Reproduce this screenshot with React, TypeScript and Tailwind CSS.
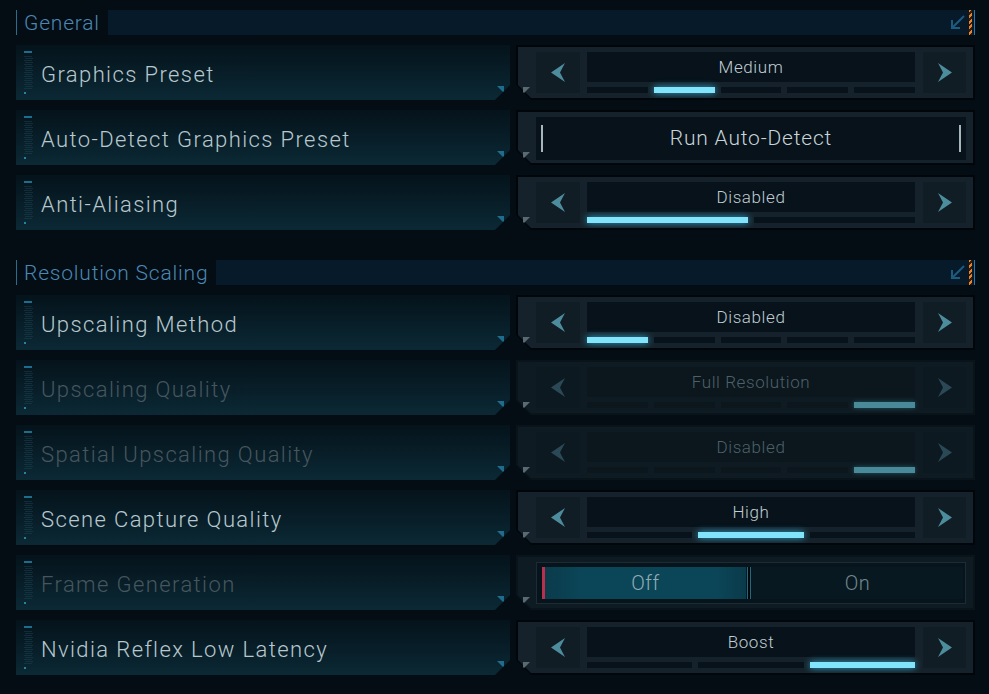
import React from 'react';

type Row = {
  label: string;
  kind: 'select' | 'button' | 'toggle';
  value?: string;
  segs?: number;
  active?: number;
  disabled?: boolean;
};

const sections: { title: string; rows: Row[] }[] = [
  {
    title: 'General',
    rows: [
      { label: 'Graphics Preset', kind: 'select', value: 'Medium', segs: 5, active: 1 },
      { label: 'Auto-Detect Graphics Preset', kind: 'button', value: 'Run Auto-Detect' },
      { label: 'Anti-Aliasing', kind: 'select', value: 'Disabled', segs: 2, active: 0 },
    ],
  },
  {
    title: 'Resolution Scaling',
    rows: [
      { label: 'Upscaling Method', kind: 'select', value: 'Disabled', segs: 5, active: 0 },
      { label: 'Upscaling Quality', kind: 'select', value: 'Full Resolution', segs: 5, active: 4, disabled: true },
      { label: 'Spatial Upscaling Quality', kind: 'select', value: 'Disabled', segs: 5, active: 4, disabled: true },
      { label: 'Scene Capture Quality', kind: 'select', value: 'High', segs: 3, active: 1 },
      { label: 'Frame Generation', kind: 'toggle', disabled: true },
      { label: 'Nvidia Reflex Low Latency', kind: 'select', value: 'Boost', segs: 3, active: 2 },
    ],
  },
];

const font = { fontFamily: 'Roboto, "Liberation Sans", sans-serif' };

function Marker() {
  const dots = [];
  for (let y = 5; y < 38; y += 2) {
    for (let x = 0; x < 8; x += 2) {
      dots.push(<rect key={`${x}-${y}`} x={x + ((y / 2) % 2)} y={y} width="1" height="1" fill="#1d4352" />);
    }
  }
  return (
    <svg width="9" height="43" viewBox="0 0 9 43" className="shrink-0">
      <rect x="0" y="0" width="8" height="2" fill="#1b6e8e" />
      {dots}
      <rect x="0" y="41" width="2" height="2" fill="#2384a6" />
    </svg>
  );
}

function Arrow({ dir, dim }: { dir: 'left' | 'right'; dim?: boolean }) {
  return (
    <svg width="15" height="19" viewBox="0 0 15 19">
      <polygon
        points={dir === 'left' ? '14,0 0,9.5 14,19 9,9.5' : '1,0 15,9.5 1,19 6,9.5'}
        fill={dim ? '#2a4855' : '#4c8c9c'}
      />
    </svg>
  );
}

function Header({ title }: { title: string }) {
  return (
    <div className="flex h-[25px] items-stretch">
      <div className="flex items-center border-l border-[#2a6c92] pl-[7px] pr-[8px] pt-[2px]">
        <span className="text-[21px] font-light leading-none tracking-[0.8px] text-[#4a88b4]" style={font}>
          {title}
        </span>
      </div>
      <div className="flex flex-1 items-center justify-end bg-[#061a2a]">
        <svg width="15" height="15" viewBox="0 0 15 15" className="mr-[4px]">
          <path d="M14 1 L2.5 12.5 M2 5 V13 H10" stroke="#1c5a7e" strokeWidth="2" fill="none" />
        </svg>
        <div className="h-full w-[3px] bg-[repeating-linear-gradient(135deg,#e8822c_0px,#e8822c_2px,#3a1c08_2px,#3a1c08_4px)]" />
        <div className="ml-[2px] h-full w-[1px] bg-[#2a78a8]" />
      </div>
    </div>
  );
}

function Segments({ n, active, dim }: { n: number; active: number; dim?: boolean }) {
  return (
    <div className="flex h-[6px] gap-[6px]">
      {Array.from({ length: n }).map((_, i) => (
        <div
          key={i}
          className={
            i === active
              ? dim
                ? 'flex-1 bg-[#4a8a98] shadow-[0_0_4px_#1f5866]'
                : 'flex-1 bg-[#82e4fa] shadow-[0_0_7px_#2fa6cc]'
              : dim
              ? 'flex-1 bg-[#0b161d]'
              : 'flex-1 bg-[#07121a]'
          }
        />
      ))}
    </div>
  );
}

function SelectControl({ row }: { row: Row }) {
  const dim = row.disabled;
  return (
    <div className="flex h-full gap-[7px]">
      <div className={`flex w-[44px] items-center justify-center ${dim ? 'bg-[#0d1920]' : 'bg-[#111d25]'}`}>
        <Arrow dir="left" dim={dim} />
      </div>
      <div className="flex flex-1 flex-col gap-[5px]">
        <div
          className={`flex h-[31px] items-center justify-center text-[17px] font-light leading-none tracking-[0.6px] ${
            dim ? 'bg-[#0b161d] text-[#4d6169]' : 'bg-[#07121a] text-[#c0ced4]'
          }`}
          style={font}
        >
          {row.value}
        </div>
        <Segments n={row.segs ?? 5} active={row.active ?? 0} dim={dim} />
      </div>
      <div className={`ml-[1px] flex w-[43px] items-center justify-center ${dim ? 'bg-[#0d1920]' : 'bg-[#111d25]'}`}>
        <Arrow dir="right" dim={dim} />
      </div>
    </div>
  );
}

function ButtonControl({ row }: { row: Row }) {
  return (
    <div className="-mb-[2px] flex h-[43px] items-center justify-between bg-[#07121a] px-[5px]">
      <div className="h-[27px] w-[2px] bg-[#a6b6bb]" />
      <span className="text-[21px] font-light leading-none tracking-[0.8px] text-[#c8d4d8]" style={font}>
        {row.value}
      </span>
      <div className="h-[27px] w-[2px] bg-[#a6b6bb]" />
    </div>
  );
}

function ToggleControl() {
  return (
    <div className="flex h-[42px] border border-[#1c2c36] bg-[#07141b] py-[4px] pl-[5px] pr-[2px]">
      <div className="flex w-[204px] items-stretch bg-[linear-gradient(90deg,#0a3a4a,#0b4658_20%,#0b4658_85%,#0a3a4a)]">
        <div className="w-[3px] bg-[#b8304e]" />
        <div className="flex flex-1 items-center justify-center text-[20px] font-light leading-none tracking-[0.6px] text-[#92acb4]" style={font}>
          Off
        </div>
      </div>
      <div className="mx-[1px] flex w-[4px] items-stretch">
        <div className="w-[1px] bg-[#1e6a80]" />
        <div className="w-[2px] bg-[#02080c]" />
        <div className="w-[1px] bg-[#1e6a80]" />
      </div>
      <div className="flex flex-1 items-center justify-center bg-[#081820] text-[20px] font-light leading-none tracking-[0.6px] text-[#70868e]" style={font}>
        On
      </div>
    </div>
  );
}

function SettingRow({ row }: { row: Row }) {
  const dimFrame = row.disabled;
  return (
    <div className="mt-[10px] flex h-[55px] gap-[6px]">
      <div className="relative flex w-[494px] items-center bg-gradient-to-b from-[#05131b] to-[#0b2935] pl-[8px] [clip-path:polygon(0_0,100%_0,100%_calc(100%_-_15px),calc(100%_-_15px)_100%,0_100%)]">
        <Marker />
        <span
          className={`ml-[8px] pt-[4px] text-[22px] font-light leading-none tracking-[1.4px] ${
            row.disabled ? 'text-[#46565e]' : 'text-[#b8c8ce]'
          }`}
          style={font}
        >
          {row.label}
        </span>
        <div className="absolute bottom-[7px] right-[6px] h-[7px] w-[7px] bg-[#1f6c8c] [clip-path:polygon(0_0,100%_0,100%_100%)]" />
      </div>
      <div
        className={`relative flex-1 p-[2px] [clip-path:polygon(0_0,100%_0,100%_100%,15px_100%,0_calc(100%_-_15px))] ${
          dimFrame ? 'bg-[#09131a]' : 'bg-[#01060a]'
        }`}
      >
        <div
          className={`h-full pb-[5px] pl-[18px] pr-[7px] pt-[5px] [clip-path:polygon(0_0,100%_0,100%_100%,13px_100%,0_calc(100%_-_13px))] ${
            dimFrame ? 'bg-[#0f1b22]' : 'bg-[#16222b]'
          }`}
        >
          {row.kind === 'select' && <SelectControl row={row} />}
          {row.kind === 'button' && <ButtonControl row={row} />}
          {row.kind === 'toggle' && <ToggleControl />}
        </div>
        <div className="absolute bottom-[6px] left-[7px] h-[7px] w-[7px] bg-[#5a6a72] [clip-path:polygon(0_0,100%_0,0_100%)]" />
      </div>
    </div>
  );
}

export default function App() {
  return (
    <div className="h-[694px] w-[989px] overflow-hidden bg-[#040c14] pl-[16px] pr-[14px] pt-[10px]">
      {sections.map((s, i) => (
        <div key={s.title} className={i > 0 ? 'mt-[30px]' : ''}>
          <Header title={s.title} />
          {s.rows.map((r) => (
            <SettingRow key={r.label} row={r} />
          ))}
        </div>
      ))}
    </div>
  );
}
